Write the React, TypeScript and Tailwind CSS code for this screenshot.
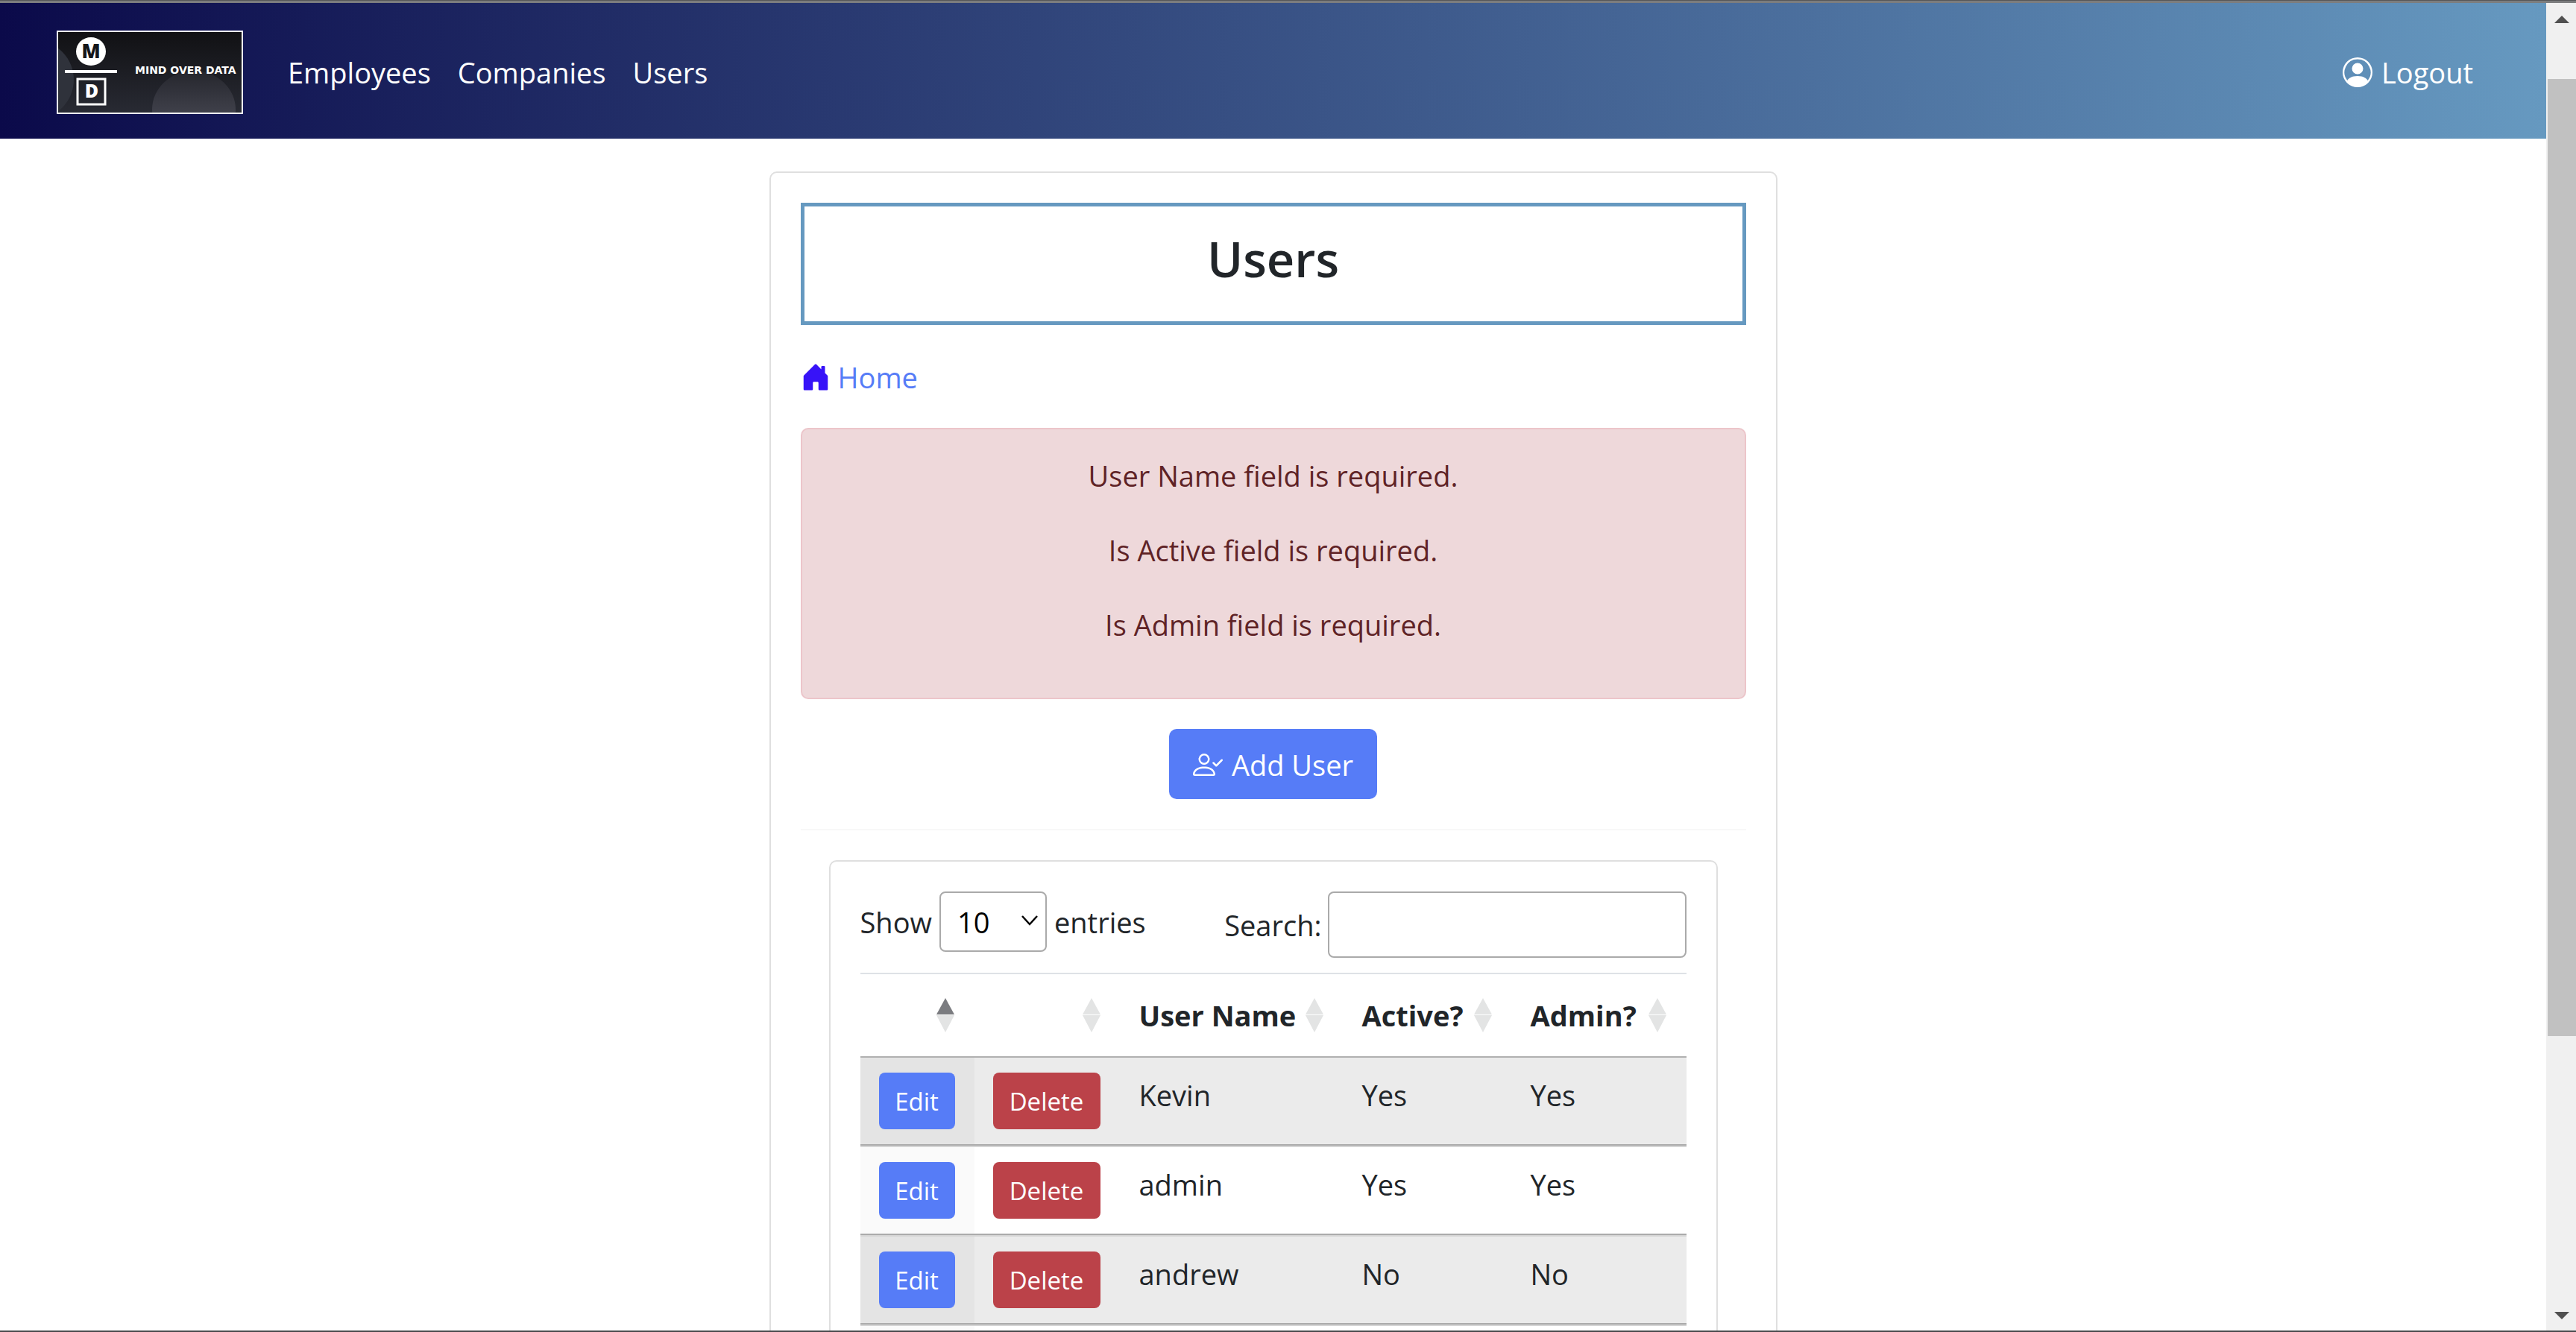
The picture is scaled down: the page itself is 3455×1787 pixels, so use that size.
import { BsHouseDoorFill, BsPersonCircle } from "react-icons/bs";

const users = [
  { name: "Kevin", active: "Yes", admin: "Yes" },
  { name: "admin", active: "Yes", admin: "Yes" },
  { name: "andrew", active: "No", admin: "No" },
];

const errors = [
  "User Name field is required.",
  "Is Active field is required.",
  "Is Admin field is required.",
];

function Logo() {
  return (
    <svg
      viewBox="0 0 246 108"
      role="img"
      aria-label="Mind Over Data"
      className="h-28 w-[250px] border-2 border-white"
      preserveAspectRatio="none"
    >
      <defs>
        <linearGradient id="logoBg" x1="0" y1="0" x2="0" y2="1">
          <stop offset="0" stopColor="#111114" />
          <stop offset="1" stopColor="#282a33" />
        </linearGradient>
        <linearGradient id="logoDisc" x1="0" y1="0" x2="0" y2="1">
          <stop offset="0" stopColor="#25262d" />
          <stop offset="0.6" stopColor="#42434d" />
        </linearGradient>
      </defs>
      <rect width="246" height="108" fill="url(#logoBg)" />
      <circle cx="-32" cy="64" r="53" fill="#2f323b" />
      <ellipse cx="182" cy="104" rx="56" ry="52" fill="url(#logoDisc)" />
      <ellipse cx="44" cy="26" rx="20" ry="19" fill="#fff" />
      <text x="44" y="35" textAnchor="middle" fontFamily="Open Sans, sans-serif" fontWeight="800" fontSize="26" fill="#15161a">
        M
      </text>
      <rect x="9" y="51" width="70" height="4" fill="#fff" />
      <rect x="26" y="63" width="37" height="34" fill="none" stroke="#fff" strokeWidth="3" />
      <text x="45" y="88" textAnchor="middle" fontFamily="Open Sans, sans-serif" fontWeight="800" fontSize="25" fill="#fff">
        D
      </text>
      <text x="103" y="56" fontFamily="DejaVu Sans, sans-serif" fontWeight="700" fontSize="14" fill="#fff">
        MIND OVER DATA
      </text>
    </svg>
  );
}

function PersonCheck() {
  return (
    <svg viewBox="0 0 16 16" fill="currentColor" className="size-10" aria-hidden="true">
      <path
        fillRule="evenodd"
        d="M8 5a2 2 0 1 1-4 0 2 2 0 0 1 4 0zM6 8a3 3 0 1 0 0-6 3 3 0 0 0 0 6zm6 5c0 1-1 1-1 1H1s-1 0-1-1 1-4 6-4 6 3 6 4zm-1-.004c-.001-.246-.154-.986-.832-1.664C9.516 10.68 8.289 10 6 10c-2.29 0-3.516.68-4.168 1.332-.678.678-.83 1.418-.832 1.664h10zm4.854-7.85a.5.5 0 0 1 0 .708l-3 3a.5.5 0 0 1-.708 0l-1.5-1.5a.5.5 0 0 1 .708-.708L12.5 7.793l2.646-2.647a.5.5 0 0 1 .708 0z"
      />
    </svg>
  );
}

function SortIcon({ ascending = false }: { ascending?: boolean }) {
  return (
    <svg viewBox="0 0 24 46" className="h-[46px] w-6 shrink-0" aria-hidden="true">
      <path d="M12 0 24 22H0z" fill={ascending ? "#7b7c80" : "#e3e4e4"} />
      <path d="M12 46 0 23h24z" fill="#e3e4e4" />
    </svg>
  );
}

function HeaderCell({ label, name, ascending }: { label?: string; name: string; ascending?: boolean }) {
  return (
    <th scope="col" className="border-y-2 border-t-[#dee2e6] border-b-[#b0b0b0] p-0 font-bold">
      <button
        type="button"
        aria-label={`Sort by ${name}`}
        className="flex h-[110px] w-full items-center justify-between pr-[27px] pl-[25px] text-left"
      >
        <span>{label}</span>
        <SortIcon ascending={ascending} />
      </button>
    </th>
  );
}

function Navbar() {
  return (
    <header className="flex shrink-0 items-center bg-linear-to-r/srgb from-[#0b0a4a] to-[#6699c0] px-[76px] pt-[37px] pb-[33px] text-white">
      <a href="#home" className="mr-[42px]">
        <Logo />
      </a>
      <nav className="flex">
        <a href="#employees" className="px-[18px]">Employees</a>
        <a href="#companies" className="px-[18px]">Companies</a>
        <a href="#users" className="px-[18px]">Users</a>
      </nav>
      <a href="#logout" className="mr-[22px] ml-auto flex items-center gap-3">
        <BsPersonCircle className="size-10" />
        Logout
      </a>
    </header>
  );
}

function UsersTable() {
  return (
    <section className="mx-[38px] mt-10 rounded-[10px] border-2 border-[#dfdfdf] p-10">
      <div className="mb-5 flex items-start justify-between">
        <label className="flex items-center gap-2.5">
          Show
          <span className="relative">
            <select
              defaultValue="10"
              className="h-[81px] w-36 appearance-none rounded-lg border-2 border-[#aaa] bg-transparent pl-[22px] text-black"
            >
              <option>10</option>
              <option>25</option>
              <option>50</option>
              <option>100</option>
            </select>
            <svg viewBox="0 0 22 14" className="pointer-events-none absolute top-8 right-3 h-3.5 w-[22px]" aria-hidden="true">
              <path d="M1 1 11 12 21 1" fill="none" stroke="#000" strokeWidth="2.5" />
            </svg>
          </span>
          entries
        </label>
        <label className="flex items-center gap-2">
          Search:
          <input type="search" className="h-[89px] w-[481px] rounded-lg border-2 border-[#aaa] bg-transparent px-3" />
        </label>
      </div>
      <table className="w-full table-fixed border-separate border-spacing-0">
        <colgroup>
          <col className="w-[153px]" />
          <col className="w-[196px]" />
          <col className="w-[299px]" />
          <col className="w-[226px]" />
          <col />
        </colgroup>
        <thead>
          <tr>
            <HeaderCell name="edit" ascending />
            <HeaderCell name="delete" />
            <HeaderCell name="user name" label="User Name" />
            <HeaderCell name="active" label="Active?" />
            <HeaderCell name="admin" label="Admin?" />
          </tr>
        </thead>
        <tbody className="[&_td]:border-b-2 [&_td]:border-b-[#ababab] [&_td]:px-[25px] [&_td]:py-5 [&_td]:align-top [&_tr+tr_td]:border-t-2 [&_tr+tr_td]:border-t-[#d5d5d5]">
          {users.map((user) => (
            <tr key={user.name} className="group odd:bg-[#ebebeb]">
              <td className="bg-[#fafafa] group-odd:bg-[#e4e4e4]">
                <button type="button" className="block h-[76px] w-[102px] rounded-lg bg-[#567cf7] pt-0.5 text-[33px] text-white">
                  Edit
                </button>
              </td>
              <td>
                <button type="button" className="block h-[76px] w-36 rounded-lg bg-[#bb4249] pt-0.5 text-[33px] text-white">
                  Delete
                </button>
              </td>
              <td>{user.name}</td>
              <td>{user.active}</td>
              <td>{user.admin}</td>
            </tr>
          ))}
          <tr>
            <td className="bg-[#fafafa]" />
            <td colSpan={4} />
          </tr>
        </tbody>
      </table>
    </section>
  );
}

function Scrollbar() {
  return (
    <div className="flex w-10 shrink-0 flex-col bg-[#f0f0f0] pl-0.5 text-[#505050]" aria-hidden="true">
      <div className="flex h-[102px] shrink-0 justify-center pt-[17px]">
        <svg viewBox="0 0 20 10" className="h-2.5 w-5" fill="currentColor">
          <path d="M10 0 20 10H0z" />
        </svg>
      </div>
      <div className="flex min-h-0 flex-1 flex-col">
        <div className="h-[77.6%] bg-[#c1c1c1]" />
      </div>
      <div className="flex shrink-0 justify-center pb-[15px]">
        <svg viewBox="0 0 20 10" className="h-2.5 w-5" fill="currentColor">
          <path d="M0 0h20L10 10z" />
        </svg>
      </div>
    </div>
  );
}

export default function App() {
  return (
    <div className="flex h-screen flex-col overflow-hidden border-b-2 border-[#48494c] bg-white font-['Open_Sans','Noto_Sans',sans-serif] text-[38px] leading-[60px] text-[#212529]">
      <div className="h-1 shrink-0 border-t border-[#555759] bg-[#7c7d7e]" />
      <div className="flex min-h-0 flex-1">
        <div className="min-w-0 flex-1 overflow-hidden">
          <Navbar />
          <main className="mx-auto mt-11 w-full max-w-[1352px] rounded-[10px] border-2 border-[#dfdfdf] p-10">
            <h1 className="h-[164px] border-[5px] border-[#6699c0] pt-7 text-center text-[65px] leading-[84px] font-semibold">
              Users
            </h1>
            <a href="#home" className="mt-10 flex items-center gap-2.5 text-[#567cf7]">
              <BsHouseDoorFill className="size-10 text-[#3713f8]" />
              Home
            </a>
            <div role="alert" className="mt-[38px] flex flex-col gap-10 rounded-[10px] border-2 border-[#ecc5ca] bg-[#eed8da] px-10 pt-8 pb-[68px] text-center text-[#5f2326]">
              {errors.map((error) => (
                <p key={error}>{error}</p>
              ))}
            </div>
            <button type="button" className="mx-auto mt-10 flex h-[94px] items-center gap-3 rounded-[10px] bg-[#567cf7] px-8 pt-0.5 text-white">
              <PersonCheck />
              Add User
            </button>
            <hr className="mt-10 border-t-2 border-[#f8f8f8]" />
            <UsersTable />
          </main>
        </div>
        <Scrollbar />
      </div>
    </div>
  );
}
